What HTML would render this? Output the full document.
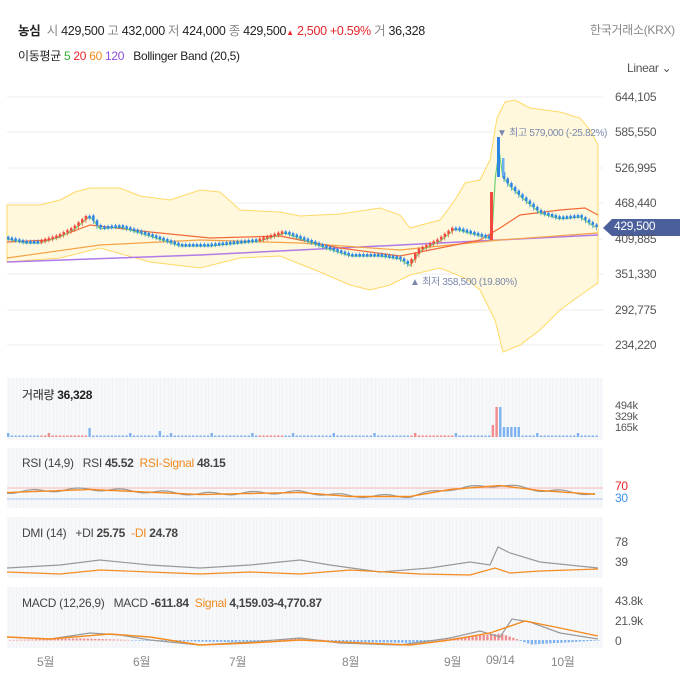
<!DOCTYPE html>
<html><head><meta charset="utf-8"><style>
body{margin:0;width:680px;height:697px;background:#fff;font-family:"Liberation Sans","Noto Sans CJK KR",sans-serif;overflow:hidden;position:relative}
.t{position:absolute;white-space:nowrap;font-size:12px;color:#222;letter-spacing:-0.3px}
.g{color:#888}.r{color:#e8242b}.b{font-weight:bold}
.ax{position:absolute;font-size:12px;color:#555;left:615px;letter-spacing:-0.3px}
</style></head><body>
<div class="t" style="left:18px;top:20px;font-size:12.5px"><span class="b">농심</span> <span class="g">&nbsp;시</span> 429,500 <span class="g">고</span> 432,000 <span class="g">저</span> 424,000 <span class="g">종</span> 429,500<span class="r" style="font-size:8px">▲</span> <span class="r">2,500 +0.59%</span> <span class="g">거</span> 36,328</div>
<div class="t g" style="left:590px;top:21px">한국거래소(KRX)</div>
<div class="t" style="left:18px;top:47px">이동평균 <span style="color:#2db52d">5</span> <span class="r">20</span> <span style="color:#f08a1c">60</span> <span style="color:#8a4de0">120</span> &nbsp; Bollinger Band (20,5)</div>
<div class="t" style="left:627px;top:61px;color:#555">Linear ⌄</div>
<svg id="s" width="680" height="697" style="position:absolute;left:0;top:0"></svg>
<div class="ax" style="top:90px">644,105</div>
<div class="ax" style="top:125px">585,550</div>
<div class="ax" style="top:161px">526,995</div>
<div class="ax" style="top:196px">468,440</div>
<div class="ax" style="top:232px">409,885</div>
<div class="ax" style="top:267px">351,330</div>
<div class="ax" style="top:303px">292,775</div>
<div class="ax" style="top:338px">234,220</div>
<div class="t" style="left:614px;top:219px;color:#fff;font-size:12px">429,500</div>
<div class="t" style="left:497px;top:124px;font-size:10px;color:#7a87aa">▼ 최고 579,000 (-25.82%)</div>
<div class="t" style="left:410px;top:273px;font-size:10px;color:#7a87aa">▲ 최저 358,500 (19.80%)</div>
<div class="t" style="left:22px;top:386px">거래량 <b>36,328</b></div>
<div class="ax" style="top:401px;font-size:11px;line-height:11px">494k<br>329k<br>165k</div>
<div class="t" style="left:22px;top:456px;color:#444">RSI (14,9) &nbsp; RSI <b>45.52</b> &nbsp;<span style="color:#f08a1c">RSI-Signal</span> <b>48.15</b></div>
<div class="ax" style="top:479px;color:#e8242b">70</div>
<div class="ax" style="top:491px;color:#3b8ef0">30</div>
<div class="t" style="left:22px;top:526px;color:#444">DMI (14) &nbsp; +DI <b>25.75</b> &nbsp;<span style="color:#f08a1c">-DI</span> <b>24.78</b></div>
<div class="ax" style="top:535px">78</div>
<div class="ax" style="top:555px">39</div>
<div class="t" style="left:22px;top:596px;color:#444">MACD (12,26,9) &nbsp; MACD <b>-611.84</b> &nbsp;<span style="color:#f08a1c">Signal</span> <b>4,159.03-4,770.87</b></div>
<div class="ax" style="top:594px">43.8k</div>
<div class="ax" style="top:614px">21.9k</div>
<div class="ax" style="top:634px">0</div>
<div class="t g" style="left:37px;top:653px">5월</div>
<div class="t g" style="left:133px;top:653px">6월</div>
<div class="t g" style="left:229px;top:653px">7월</div>
<div class="t g" style="left:342px;top:653px">8월</div>
<div class="t g" style="left:444px;top:653px">9월</div>
<div class="t g" style="left:486px;top:653px">09/14</div>
<div class="t g" style="left:551px;top:653px">10월</div>
<script>
const S=document.getElementById('s');let h='';
function lerp(p,x){for(let i=0;i<p.length-1;i++){if(x<=p[i+1][0]){const a=p[i],b=p[i+1];return a[1]+(b[1]-a[1])*(x-a[0])/(b[0]-a[0]);}}return p[p.length-1][1];}
function pl(p,c,w,f){return `<polyline points="${p.map(q=>q.join(',')).join(' ')}" fill="${f||'none'}" stroke="${c}" stroke-width="${w||1}"/>`;}
for(let y of [97,132,168,203,239,274,310,345])h+=`<line x1="7" x2="603" y1="${y}" y2="${y}" stroke="#eee"/>`;
const up=[[7,205],[40,205],[60,200],[75,192],[90,188],[120,188],[140,196],[170,200],[200,190],[220,192],[240,210],[280,212],[300,216],[340,214],[380,208],[400,215],[410,228],[440,220],[455,200],[465,183],[480,180],[490,160],[497,118],[505,102],[515,100],[530,108],[560,112],[580,118],[590,130],[598,145]];
const lo=[[7,262],[60,258],[100,248],[150,262],[200,268],[240,258],[280,256],[320,272],[350,285],[370,290],[390,285],[410,275],[440,268],[465,278],[480,290],[495,320],[503,352],[520,345],[540,330],[560,310],[585,292],[598,283]];
h+=`<polygon points="${up.concat(lo.slice().reverse()).map(q=>q.join(',')).join(' ')}" fill="#fff8dc" stroke="#ffd966"/>`;
const pr=[[7,238],[25,242],[40,242],[60,236],[75,228],[90,215],[100,228],[120,226],[150,235],[180,245],[210,245],[240,242],[260,240],[285,232],[320,245],[350,255],[380,255],[400,258],[410,265],[420,250],[440,240],[455,228],[480,235],[492,238],[494,195],[498,140],[502,175],[510,185],[520,195],[540,212],[560,218],[580,216],[598,228]];
const mid=[[7,242],[50,240],[90,225],[150,232],[210,238],[280,236],[340,248],[400,256],[440,248],[480,240],[500,228],[520,215],[560,210],[585,208],[598,215]];
h+=pl([[7,262],[200,255],[400,245],[598,235]],'#b07ae8',1.5);
h+=pl([[7,258],[100,245],[200,240],[300,243],[400,250],[500,240],[598,233]],'#f5a34a',1.2);
h+=pl(mid,'#f26a3a',1.2);
let gp=[];for(let x=7;x<=598;x+=3.7){gp.push([x.toFixed(1),(lerp(pr,x)+1).toFixed(1)]);}
h+=pl(gp,'#6fd06f',1.2);
let i=0;for(let x=7;x<=598;x+=3.7,i++){if(x>488&&x<500)continue;const y=lerp(pr,x-1),y2=lerp(pr,x+3);const red=y2<y-0.5;const c=red?'#f2483e':'#2d86e6';const bh=Math.max(2.5,Math.abs(y2-y));h+=`<line x1="${x+1.2}" x2="${x+1.2}" y1="${Math.min(y,y2)-2.5}" y2="${Math.max(y,y2)+2.5}" stroke="${c}" stroke-width="0.7"/><rect x="${x}" y="${Math.min(y,y2)-1}" width="2.5" height="${bh}" fill="${c}"/>`;}
h+=`<rect x="490" y="192" width="3" height="48" fill="#f2483e"/><rect x="497" y="137" width="3" height="40" fill="#2d86e6"/><rect x="502" y="158" width="2.5" height="18" fill="#6aaef0"/>`;
h+=`<polygon points="603,228 612,219 680,219 680,236 612,236" fill="#4a5f9c"/>`;
for(const [a,b] of [[378,440],[448,508],[517,578],[587,648]]){h+=`<rect x="7" y="${a}" width="596" height="${b-a}" fill="#f7f8fa"/>`;for(let x=9;x<603;x+=3.7)h+=`<line x1="${x}" x2="${x}" y1="${a}" y2="${b}" stroke="#eceef2" stroke-width="0.6"/>`;}
i=0;for(let x=7;x<=598;x+=3.7,i++){let v=1.5+((i*7)%11==0?2.5:0);if(x>488&&x<500)v=x>494?30:12;else if(x>500&&x<520)v=10;if(x>85&&x<90)v=9;if(x>155&&x<160)v=6;const y=lerp(pr,x-1),y2=lerp(pr,x+3);const c=(y2<y-0.5)?'#f28b8b':'#7fb2f0';h+=`<rect x="${x}" y="${437-v}" width="2.4" height="${v}" fill="${c}"/>`;}
h+=`<line x1="7" x2="603" y1="488" y2="488" stroke="#f4b8b8"/><line x1="7" x2="603" y1="499" y2="499" stroke="#a9c9f2"/>`;
const rs=[];const rg=[];for(let x=7;x<=598;x+=4){const base=lerp([[7,492],[90,489],[200,494],[300,492],[350,496],[410,496],[450,489],[500,485],[540,490],[598,494]],x);rs.push([x,(base+Math.sin(x/7)*1.5).toFixed(1)]);rg.push([x,(base+0.5).toFixed(1)]);}
h+=pl(rs,'#999',1.2)+pl(rg,'#f58b1f',1.4);
h+=pl([[7,568],[60,565],[100,560],[150,565],[200,568],[250,565],[300,560],[330,565],[380,572],[430,568],[470,562],[490,565],[498,547],[510,553],[540,562],[598,568]],'#999',1.2);
h+=pl([[7,572],[60,574],[100,570],[150,572],[200,574],[250,572],[300,574],[350,570],[420,574],[470,575],[495,568],[510,573],[540,571],[598,569]],'#f58b1f',1.2);
i=0;for(let x=9;x<=598;x+=3.7,i++){const m=lerp([[7,640],[80,638],[130,640],[230,642],[300,638],[350,642],[420,643],[470,635],[500,632],[530,645],[598,640]],x);const v=(640-m)*0.8;const c=(v>0)?'#f28b8b':'#7fb2f0';h+=`<rect x="${x}" y="${Math.min(640,640-v)}" width="2.3" height="${Math.abs(v)+0.5}" fill="${c}"/>`;}
h+=pl([[7,637],[50,639],[90,633],[120,635],[150,640],[200,645],[250,642],[300,638],[340,643],[400,645],[450,638],[480,631],[500,637],[512,619],[530,622],[560,633],[598,639]],'#999',1.2);
h+=pl([[7,637],[50,639],[110,634],[150,637],[200,645],[250,643],[300,640],[340,642],[410,645],[450,640],[490,633],[525,621],[560,628],[598,636]],'#f58b1f',1.4);
S.innerHTML=h;
</script>
</body></html>
